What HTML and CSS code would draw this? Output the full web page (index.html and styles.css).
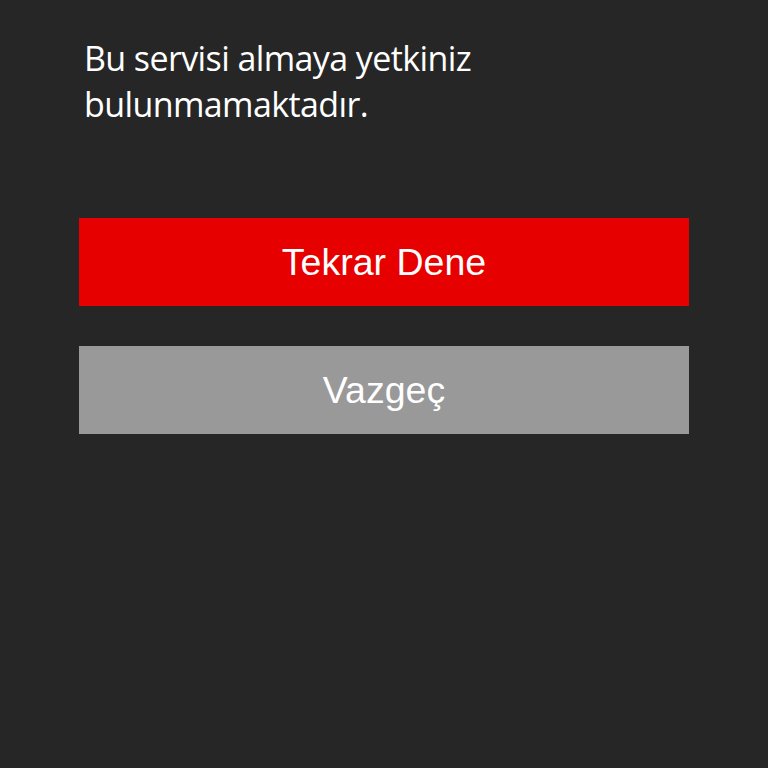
FILE: index.html
```html
<!DOCTYPE html>
<html lang="tr">
<head>
<meta charset="utf-8">
<title>Hata</title>
<link rel="stylesheet" href="styles.css">
</head>
<body>
<main class="dialog">
  <p class="message">Bu servisi almaya yetkiniz bulunmamaktadır.</p>
  <div class="actions">
    <button class="btn btn-primary" type="button">Tekrar Dene</button>
    <button class="btn btn-secondary" type="button">Vazgeç</button>
  </div>
</main>
</body>
</html>
```

FILE: styles.css
```css
html, body {
  margin: 0;
  padding: 0;
  background: #262626;
  height: 100%;
}

.dialog {
  padding: 0 79px;
}

.message {
  margin: 0;
  padding: 35px 0 0 5px;
  height: 92px;
  max-width: 430px;
  color: #ffffff;
  font-family: "Open Sans", sans-serif;
  font-size: 34px;
  line-height: 46px;
  letter-spacing: -0.6px;
}

.actions {
  display: flex;
  flex-direction: column;
  gap: 40px;
  margin-top: 91px;
}

.btn {
  display: block;
  width: 100%;
  height: 88px;
  border: 0;
  margin: 0;
  padding: 0;
  color: #ffffff;
  font-family: "Liberation Sans", Arial, sans-serif;
  font-size: 37.5px;
}

.btn-primary {
  background: #e60000;
}

.btn-secondary {
  background: #999999;
}
```
